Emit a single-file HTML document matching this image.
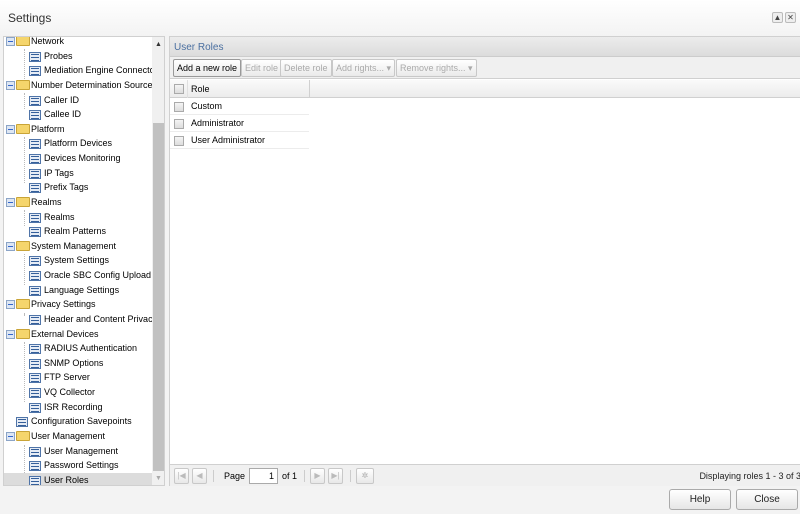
<!DOCTYPE html>
<html><head><meta charset="utf-8"><style>
*{box-sizing:border-box;margin:0;padding:0}
body{width:800px;height:514px;overflow:hidden;background:#f3f3f3;font-family:"Liberation Sans",Arial,sans-serif;font-size:9px;color:#000;position:relative}
.abs{position:absolute}
#title{left:0;top:0;width:800px;height:36px;background:linear-gradient(#fff,#f3f3f3)}
#title span{position:absolute;left:8px;top:11px;font-size:12px;color:#333}
.tb{position:absolute;top:12px;width:11px;height:11px;border:1px solid #bbb;background:#eee;font-size:8px;line-height:9px;text-align:center;color:#444;border-radius:2px}
#left{left:3px;top:36px;width:162px;height:450px;background:#fff;border:1px solid #d0d0d0;overflow:hidden}
#sb{left:148px;top:0;width:14px;height:450px;background:#f0f0f0}
#thumb{left:149px;top:86px;width:12px;height:348px;background:#c1c1c1}
.row{position:absolute;left:0;width:148px;height:15px;line-height:14px;white-space:nowrap;overflow:hidden}
.row.sel{background:#dcdcdc}
.exp{position:absolute;left:2px;top:3px;width:9px;height:9px;border:1px solid #8ba4c7;background:#dde6f3}
.exp:after{content:"";position:absolute;left:1px;top:3px;width:5px;height:1px;background:#36c}
.fold{position:absolute;left:12px;top:2px;width:14px;height:10px;background:#f5d56c;border:1px solid #c9a437;border-radius:1px}
.leaf{position:absolute;width:12px;height:10px;top:3px;background:#e6ecf5;border:1px solid #4f74a8}
.leaf:before{content:"";position:absolute;left:1px;top:1px;width:8px;height:1px;background:#355f9a;box-shadow:0 3px 0 #355f9a,0 6px 0 #355f9a}
.t{position:absolute;top:0}
.line{position:absolute;border-left:1px dotted #bbb}
#right{left:169px;top:36px;width:631px;height:450px;background:#fff;border:1px solid #d0d0d0;border-right:none}
#hdr{left:0;top:0;width:631px;height:20px;background:linear-gradient(#ececec,#dcdcdc);border-bottom:1px solid #ccc}
#hdr span{position:absolute;left:4px;top:5px;color:#4a6fa0;font-size:10px}
#tool{left:0;top:20px;width:631px;height:22px;background:#f0f0f0;border-bottom:1px solid #d0d0d0}
.btn{position:absolute;top:2px;height:18px;border:1px solid #c8c8c8;border-radius:2px;background:linear-gradient(#fff,#eaeaea);color:#aaa;line-height:16px;padding:0 3px;font-size:9px;white-space:nowrap}
.btn.on{color:#000;border-color:#999}
#gh{left:0;top:43px;width:631px;height:18px;background:linear-gradient(#fafafa,#ececec);border-bottom:1px solid #d0d0d0}
.cb{position:absolute;left:4px;width:10px;height:10px;border:1px solid #aaa;background:linear-gradient(#f4f4f4,#ddd)}
.gr{position:absolute;left:0;width:139px;height:17px;border-bottom:1px solid #ececec;line-height:16px}
#page{left:0;top:427px;width:631px;height:22px;background:#f0f0f0;border-top:1px solid #d0d0d0}
.pb{position:absolute;top:3px;width:15px;height:16px;border:1px solid #c8c8c8;border-radius:2px;background:linear-gradient(#fff,#e8e8e8);color:#bbb;font-size:8px;text-align:center;line-height:14px}
.sep{position:absolute;top:5px;width:1px;height:12px;background:#ccc}
.fb{position:absolute;top:489px;width:62px;height:21px;border:1px solid #aaa;border-radius:3px;background:linear-gradient(#fff,#e6e6e6);text-align:center;line-height:19px;font-size:10px;color:#222}
</style></head><body>
<div id="title" class="abs"><span>Settings</span><div class="tb" style="left:772px">&#9650;</div><div class="tb" style="left:785px">✕</div></div>

<div id="left" class="abs">
<div class="line" style="left:20px;top:12px;height:30px"></div>
<div class="line" style="left:20px;top:56px;height:16px"></div>
<div class="line" style="left:20px;top:100px;height:46px"></div>
<div class="line" style="left:20px;top:173px;height:16px"></div>
<div class="line" style="left:20px;top:217px;height:31px"></div>
<div class="line" style="left:20px;top:276px;height:2px"></div>
<div class="line" style="left:20px;top:305px;height:60px"></div>
<div class="line" style="left:20px;top:408px;height:30px"></div>
<div id="rows"></div>
<div id="sb" class="abs"></div>
<div class="abs" style="left:151px;top:4px;font-size:7px;color:#333">&#9650;</div>
<div class="abs" style="left:151px;top:438px;font-size:7px;color:#aaa">&#9660;</div>
<div id="thumb" class="abs"></div>
</div>

<div id="right" class="abs">
<div id="hdr" class="abs"><span>User Roles</span></div>
<div id="tool" class="abs">
<div class="btn on" style="left:3px">Add a new role</div>
<div class="btn" style="left:71px">Edit role</div>
<div class="btn" style="left:110px">Delete role</div>
<div class="btn" style="left:162px">Add rights... &#9662;</div>
<div class="btn" style="left:226px">Remove rights... &#9662;</div>
</div>
<div id="gh" class="abs"><div class="cb" style="top:4px"></div><span style="position:absolute;left:21px;top:4px">Role</span><div style="position:absolute;left:139px;top:0;width:1px;height:18px;background:#d0d0d0"></div><div style="position:absolute;left:17px;top:0;width:1px;height:18px;background:#e0e0e0"></div></div>
<div class="gr" style="top:61px"><div class="cb" style="top:4px"></div><span style="position:absolute;left:21px">Custom</span></div>
<div class="gr" style="top:78px"><div class="cb" style="top:4px"></div><span style="position:absolute;left:21px">Administrator</span></div>
<div class="gr" style="top:95px"><div class="cb" style="top:4px"></div><span style="position:absolute;left:21px">User Administrator</span></div>
<div id="page" class="abs">
<div class="pb" style="left:4px">|◀</div><div class="pb" style="left:22px">◀</div>
<div class="sep" style="left:43px"></div>
<span style="position:absolute;left:54px;top:6px">Page</span>
<div style="position:absolute;left:79px;top:3px;width:29px;height:16px;border:1px solid #aaa;background:#fff;text-align:right;padding-right:3px;line-height:14px">1</div>
<span style="position:absolute;left:112px;top:6px">of 1</span>
<div class="sep" style="left:134px"></div>
<div class="pb" style="left:140px">▶</div><div class="pb" style="left:158px">▶|</div>
<div class="sep" style="left:180px"></div>
<div class="pb" style="left:186px;width:18px;color:#aaa">✲</div>
<span style="position:absolute;right:0;top:6px;color:#222">Displaying roles 1 - 3 of 3</span>
</div>
</div>

<div class="fb" style="left:669px">Help</div>
<div class="fb" style="left:736px">Close</div>

<script>
var items=[[0,"Network"],[1,"Probes"],[1,"Mediation Engine Connectors"],[0,"Number Determination Sources"],[1,"Caller ID"],[1,"Callee ID"],[0,"Platform"],[1,"Platform Devices"],[1,"Devices Monitoring"],[1,"IP Tags"],[1,"Prefix Tags"],[0,"Realms"],[1,"Realms"],[1,"Realm Patterns"],[0,"System Management"],[1,"System Settings"],[1,"Oracle SBC Config Upload"],[1,"Language Settings"],[0,"Privacy Settings"],[1,"Header and Content Privacy"],[0,"External Devices"],[1,"RADIUS Authentication"],[1,"SNMP Options"],[1,"FTP Server"],[1,"VQ Collector"],[1,"ISR Recording"],[2,"Configuration Savepoints"],[0,"User Management"],[1,"User Management"],[1,"Password Settings"],[1,"User Roles"]];
var h="";
for(var i=0;i<items.length;i++){var k=items[i][0],t=items[i][1],y=Math.round(-3+i*14.63);
h+='<div class="row'+(i==30?' sel':'')+'" style="top:'+y+'px">';
if(k==0)h+='<div class="exp"></div><div class="fold"></div><span class="t" style="left:27px">'+t+'</span>';
else if(k==1)h+='<div class="leaf" style="left:25px"></div><span class="t" style="left:40px">'+t+'</span>';
else h+='<div class="leaf" style="left:12px"></div><span class="t" style="left:27px">'+t+'</span>';
h+='</div>';}
document.getElementById('rows').innerHTML=h;
</script>
</body></html>
